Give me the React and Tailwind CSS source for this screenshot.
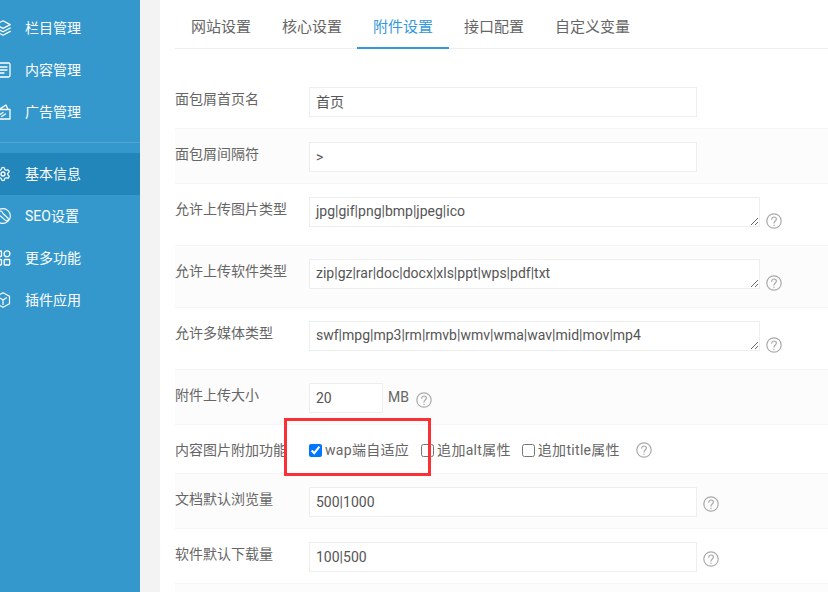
import React from "react";

const LayersIcon = () => (
  <svg viewBox="0 0 16 16" className="w-4 h-4 shrink-0" fill="none" stroke="currentColor" strokeWidth="1.3" strokeLinejoin="round" strokeLinecap="round">
    <path d="M8 .8 15.2 4.6 8 8.4.8 4.6Z" />
    <path d="M.8 8 8 11.8 15.2 8" />
    <path d="M.8 11.400 8 15.200l7.200-3.800" />
  </svg>
);
const ContentIcon = () => (
  <svg viewBox="0 0 16 16" className="w-4 h-4 shrink-0" fill="none" stroke="currentColor" strokeWidth="1.3" strokeLinecap="round">
    <rect x="1" y="1" width="14" height="14" rx="1.5" />
    <path d="M4 5h8M4 8h8M4 11h5" />
  </svg>
);
const AdIcon = () => (
  <svg viewBox="0 0 16 16" className="w-4 h-4 shrink-0" fill="none" stroke="currentColor" strokeWidth="1.3" strokeLinejoin="round" strokeLinecap="round">
    <path d="M1 5.500h14V15H1Z" />
    <path d="M4 5.500 11 1l2 4.500" />
    <path d="M5 10.500 8 8.500M6.500 12.500l4-2.500" />
  </svg>
);
const GearIcon = () => (
  <svg viewBox="0 0 24 24" className="w-4 h-4 shrink-0" fill="none" stroke="currentColor" strokeWidth="2" strokeLinejoin="round" strokeLinecap="round">
    <path d="M9.67 4.14a2.34 2.34 0 0 1 4.66 0 2.34 2.34 0 0 0 3.32 1.91 2.34 2.34 0 0 1 2.33 4.04 2.34 2.34 0 0 0 0 3.82 2.34 2.34 0 0 1-2.33 4.04 2.34 2.34 0 0 0-3.32 1.91 2.34 2.34 0 0 1-4.66 0 2.34 2.34 0 0 0-3.32-1.91 2.34 2.34 0 0 1-2.33-4.04 2.34 2.34 0 0 0 0-3.82 2.34 2.34 0 0 1 2.33-4.04 2.34 2.34 0 0 0 3.32-1.91Z" />
    <circle cx="12" cy="12" r="3" />
  </svg>
);
const SeoIcon = () => (
  <svg viewBox="0 0 16 16" className="w-4 h-4 shrink-0" fill="none" stroke="currentColor" strokeWidth="1.100" strokeLinejoin="round" strokeLinecap="round">
    <circle cx="8" cy="8" r="7.400" />
    <path d="M4 3.500l2.500-.5 1.500 2.500 4.800 4.500a1.600 1.600 0 0 1-2.300 2.300L5.500 8 3.500 7Z" />
  </svg>
);
const MoreIcon = () => (
  <svg viewBox="0 0 16 16" className="w-4 h-4 shrink-0" fill="none" stroke="currentColor" strokeWidth="1.300" strokeLinejoin="round">
    <rect x="1" y="1" width="5.500" height="5.500" rx=".8" />
    <circle cx="12" cy="3.800" r="2.900" />
    <rect x="1" y="9.500" width="5.500" height="5.500" rx=".8" />
    <rect x="9.200" y="9.500" width="5.500" height="5.500" rx=".8" />
  </svg>
);
const PluginIcon = () => (
  <svg viewBox="0 0 16 16" className="w-4 h-4 shrink-0" fill="none" stroke="currentColor" strokeWidth="1.200" strokeLinejoin="round" strokeLinecap="round">
    <path d="M8 .7 14.500 4.300v7.400L8 15.300 1.500 11.700V4.300Z" />
    <path d="M4.500 5.800 8 8l3.500-2.200M8 8v4.500" />
  </svg>
);

const Help = ({ className }) => (
  <svg viewBox="0 0 16 16" className={`w-4 h-4 shrink-0 text-[#aaaaaa] ${className}`} fill="none" stroke="currentColor" strokeWidth="1.200" strokeLinecap="round" strokeLinejoin="round">
    <circle cx="8" cy="8" r="7.200" />
    <path d="M5.700 6.200C5.700 4.800 6.800 4 8 4s2.400.8 2.400 2.100c0 1.800-2.400 2-2.400 4" />
    <path d="M8 12.200v.2" />
  </svg>
);

const Nav = ({ icon: Icon, label, active }) => (
  <div className={`h-[42px] flex items-center gap-[14px] text-[14px] text-white ${active ? "bg-[#2386bb]" : ""}`}>
    <span className="-ml-[5px] flex"><Icon /></span>
    <span className="leading-[21px] self-start mt-[11px]">{label}</span>
  </div>
);

const Row = ({ label, shade, children, tall }) => (
  <div className={`flex items-start border-b border-[#f5f5f5] pt-[13px] ${tall ? "pb-[16px]" : "pb-[11px]"} ${shade ? "bg-[#fcfcfc]" : "bg-white"}`}>
    <div className="w-[134px] shrink-0 pt-[2px] text-[14px] leading-5 text-[#666]">{label}</div>
    {children}
  </div>
);

const box = "h-[30px] box-border border border-[#eeeeee] bg-white px-[6px] text-[14px] text-[#555] outline-none";
const area = `${box} w-[451px] py-[2px] leading-[22px] resize block`;

export default function App() {
  return (
    <div className="relative w-[828px] h-[592px] overflow-hidden flex bg-white" style={{ fontFamily: 'Roboto,"Noto Sans CJK SC",sans-serif' }}>
      <aside className="w-[140px] shrink-0 bg-[#3498cd] pt-[7px] overflow-hidden">
        <Nav icon={LayersIcon} label="栏目管理" />
        <Nav icon={ContentIcon} label="内容管理" />
        <Nav icon={AdIcon} label="广告管理" />
        <div className="mt-[9px] mb-[10px] h-px bg-[#4da6d6]" />
        <Nav icon={GearIcon} label="基本信息" active />
        <Nav icon={SeoIcon} label="SEO设置" />
        <Nav icon={MoreIcon} label="更多功能" />
        <Nav icon={PluginIcon} label="插件应用" />
      </aside>
      <div className="w-5 shrink-0 bg-[#f3f3f3]" />
      <main className="flex-1 pl-[15px] min-w-0">
        <div className="h-[49px] box-border border-b border-[#eeeeee] flex">
          {["网站设置", "核心设置", "附件设置", "接口配置", "自定义变量"].map((t, i) => (
            <div key={t} className={`h-[49px] box-border px-4 -mr-px pt-[16px] text-[15px] leading-[22px] ${i === 2 ? "border-b-2 border-[#3498db] text-[#3498db]" : "text-[#666]"}`}>{t}</div>
          ))}
        </div>
        <div className="pt-[25px]">
          <Row label="面包屑首页名">
            <input readOnly defaultValue="首页" className={`${box} w-[388px] pb-[2px]`} />
          </Row>
          <Row label="面包屑间隔符" shade>
            <input readOnly defaultValue=">" className={`${box} w-[388px]`} />
          </Row>
          <Row label="允许上传图片类型" tall>
            <textarea readOnly defaultValue="jpg|gif|png|bmp|jpeg|ico" className={area} />
            <Help className="ml-[6px] mt-[16px]" />
          </Row>
          <Row label="允许上传软件类型" shade tall>
            <textarea readOnly defaultValue="zip|gz|rar|doc|docx|xls|ppt|wps|pdf|txt" className={area} />
            <Help className="ml-[6px] mt-[16px]" />
          </Row>
          <Row label="允许多媒体类型" tall>
            <textarea readOnly defaultValue="swf|mpg|mp3|rm|rmvb|wmv|wma|wav|mid|mov|mp4" className={area} />
            <Help className="ml-[6px] mt-[16px]" />
          </Row>
          <Row label="附件上传大小" shade>
            <input readOnly defaultValue="20" className={`${box} w-[74px]`} />
            <span className="ml-[5px] text-[14px] leading-[28px] text-[#666]">MB</span>
            <Help className="ml-[7px] mt-[9px]" />
          </Row>
          <div className="h-[49px] box-border pt-[2px] flex items-center border-b border-[#f5f5f5] bg-white text-[14px] text-[#666]">
            <div className="w-[134px] shrink-0">内容图片附加功能</div>
            <input type="checkbox" defaultChecked className="w-[13px] h-[13px] m-0" />
            <span className="ml-[3px] tracking-[0.3px]">wap端自适应</span>
            <input type="checkbox" className="w-[13px] h-[13px] m-0 ml-[12px]" />
            <span className="ml-[3px] tracking-[0.3px]">追加alt属性</span>
            <input type="checkbox" className="w-[13px] h-[13px] m-0 ml-[11px]" />
            <span className="ml-[3px] tracking-[0.3px]">追加title属性</span>
            <Help className="ml-[16px]" />
          </div>
          <Row label="文档默认浏览量" shade>
            <input readOnly defaultValue="500|1000" className={`${box} w-[388px]`} />
            <Help className="ml-[6px] mt-[9px]" />
          </Row>
          <Row label="软件默认下载量">
            <input readOnly defaultValue="100|500" className={`${box} w-[388px]`} />
            <Help className="ml-[6px] mt-[9px]" />
          </Row>
          <div className="h-[30px] bg-[#fcfcfc]" />
        </div>
      </main>
      <div className="absolute left-[284px] top-[418px] w-[147px] h-[58px] border-[3px] border-[#fb3035] pointer-events-none" />
    </div>
  );
}
